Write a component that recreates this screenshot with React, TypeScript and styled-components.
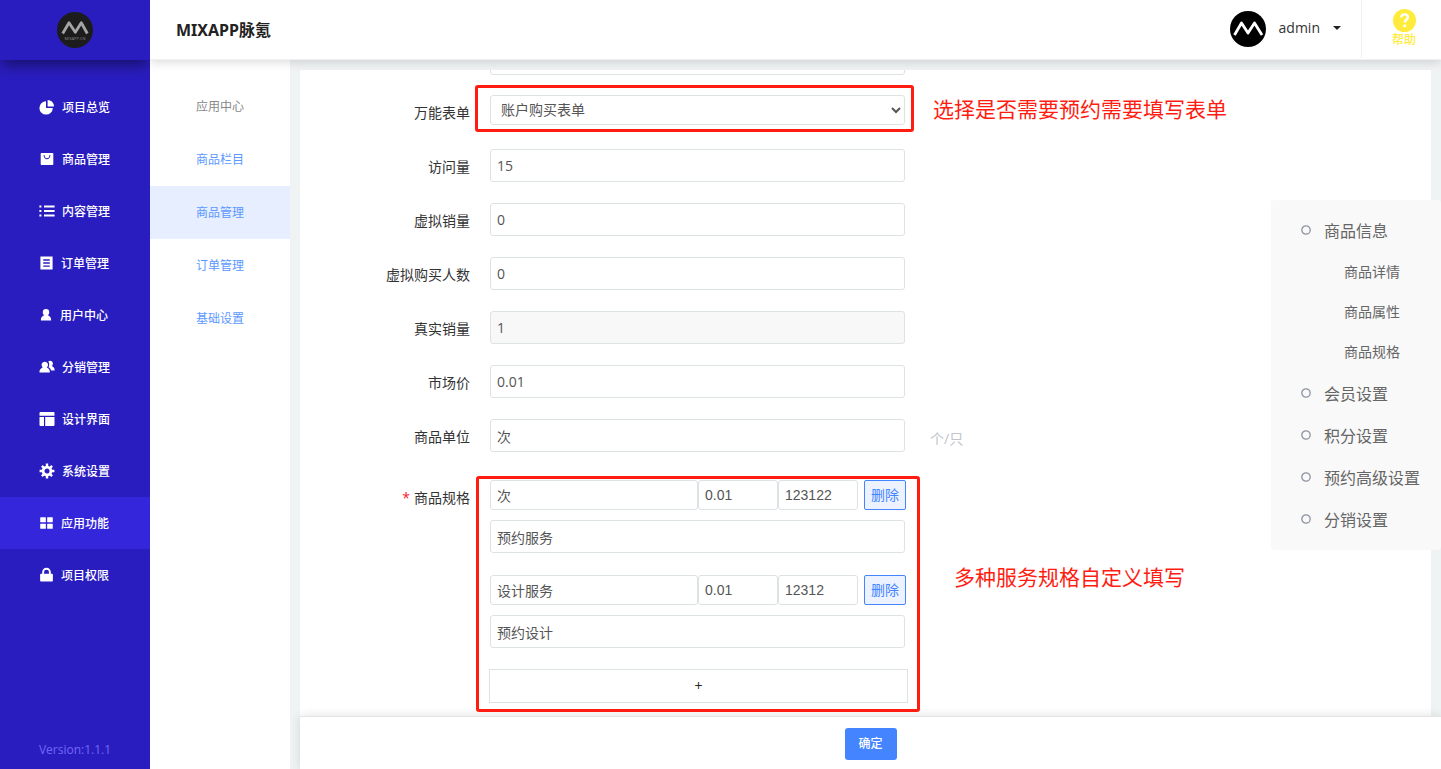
import React from "react";
import styled, { createGlobalStyle, css } from "styled-components";

const GlobalStyle = createGlobalStyle`
  *, *::before, *::after { box-sizing: border-box; }
  body {
    margin: 0;
    background: #eff3f4;
    color: #333;
    font-family: "Open Sans", "Noto Sans CJK SC", sans-serif;
    font-size: 14px;
    line-height: 20px;
  }
  button, input, select { font: inherit; margin: 0; }
  ul { list-style: none; margin: 0; padding: 0; }
  a { color: inherit; text-decoration: none; }
`;

const Shell = styled.div`
  display: flex;
  height: 100vh;
  overflow: hidden;
`;

/* ---------- left navigation ---------- */

const Sidebar = styled.nav`
  display: flex;
  flex-direction: column;
  flex: none;
  width: 150px;
  background: #2a1dbf;
  color: #fff;
  z-index: 3;
`;

const Brand = styled.div`
  display: flex;
  align-items: center;
  justify-content: center;
  height: 60px;
  box-shadow: 0 8px 12px -2px rgba(0, 0, 0, 0.4);
  clip-path: inset(0 0 -20px 0);
`;

const NavList = styled.ul`
  padding-top: 21px;
  flex: 1;
`;

const NavLink = styled.a<{ $active?: boolean }>`
  display: flex;
  align-items: center;
  gap: 7px;
  height: 52px;
  padding-left: 39px;
  font-size: 12px;
  font-weight: 500;
  background: ${(p) => (p.$active ? "#3426db" : "transparent")};
`;

const NavText = styled.span`
  padding-top: 1px;
`;

const IconBox = styled.span<{ $width: number }>`
  display: flex;
  justify-content: center;
  flex: none;
  width: ${(p) => p.$width}px;
  padding-bottom: 1px;
`;

const Version = styled.div`
  padding-bottom: 9px;
  text-align: center;
  font-size: 12px;
  color: #7468f5;
`;

/* ---------- header ---------- */

const Column = styled.div`
  display: flex;
  flex-direction: column;
  flex: 1;
  min-width: 0;
`;

const Header = styled.header`
  display: flex;
  align-items: center;
  flex: none;
  height: 60px;
  padding-left: 26px;
  background: #fff;
  border-bottom: 1px solid #f1f1f1;
  box-shadow: 0 2px 10px rgba(0, 0, 0, 0.15);
  z-index: 2;
`;

const Title = styled.h1`
  flex: 1;
  margin: 0;
  font-family: "Noto Sans", "Noto Sans CJK SC", sans-serif;
  font-size: 16px;
  font-weight: 700;
  color: #222;
`;

const Account = styled.button`
  display: flex;
  align-items: center;
  align-self: flex-start;
  gap: 13px;
  height: 58px;
  padding: 0 20px 0 0;
  border: 0;
  border-right: 1px solid #f0f0f0;
  background: none;
  color: #333;
`;

const UserName = styled.span`
  padding-bottom: 2px;
`;

const Caret = styled.span`
  margin-bottom: 2px;
  border: 4px solid transparent;
  border-top-color: #222;
  border-bottom-width: 0;
`;

const Help = styled.a`
  display: flex;
  flex-direction: column;
  align-items: center;
  width: 79px;
  padding: 0 0 2px 5px;
  font-size: 12px;
  font-weight: 500;
  line-height: 16px;
  color: #ffeb3b;
`;

/* ---------- body ---------- */

const Body = styled.div`
  display: flex;
  flex: 1;
  min-height: 0;
`;

const SubMenu = styled.nav`
  flex: none;
  width: 140px;
  padding-top: 20px;
  background: #fff;
  font-size: 12px;
  text-align: center;
  line-height: 53px;
  color: #5b98ff;
`;

const SubTitle = styled.div`
  color: #888;
`;

const SubLink = styled.a<{ $active?: boolean }>`
  display: block;
  background: ${(p) => (p.$active ? "#e7eeff" : "transparent")};
`;

const Workspace = styled.main`
  position: relative;
  display: flex;
  flex-direction: column;
  flex: 1;
  min-width: 0;
  padding: 10px 0 0 10px;
`;

const Card = styled.section`
  flex: 1;
  min-height: 0;
  margin-right: 10px;
  overflow: hidden;
  background: #fff;
`;

const Form = styled.form`
  margin-top: -29px;
`;

const Row = styled.div<{ $top?: number }>`
  display: grid;
  grid-template-columns: 170px 415px 1fr;
  column-gap: 20px;
  min-height: 54px;
  padding-top: ${(p) => p.$top ?? 0}px;
`;

const Label = styled.label`
  padding-top: 8px;
  text-align: right;
`;

const Required = styled.span`
  color: #f5222d;
  margin-right: 4px;
`;

const Control = styled.div`
  position: relative;
`;

const field = css`
  display: block;
  border: 1px solid #dde2e5;
  border-radius: 3px;
  background: #fff;
  color: #555;
  outline: 0;
`;

const Input = styled.input<{ $tall?: boolean }>`
  ${field}
  width: 100%;
  height: ${(p) => (p.$tall ? 34 : 33)}px;
  padding: 0 6px;
  &:disabled {
    background: #f8f8f8;
  }
`;

const Select = styled.select`
  ${field}
  width: 100%;
  height: 30px;
  padding: 0 6px 1px;
`;

const SmallInput = styled.input<{ $width: number }>`
  ${field}
  width: ${(p) => p.$width}px;
  height: 30px;
  padding: 0 6px;
  font-family: "Liberation Sans", "Noto Sans CJK SC", sans-serif;
`;

const Hint = styled.span`
  padding: 10px 0 0 5px;
  color: #c0c4cc;
`;

const Callout = styled.strong<{ $top: number; $left: number }>`
  padding: ${(p) => p.$top}px 0 0 ${(p) => p.$left}px;
  font-size: 21px;
  line-height: 28px;
  font-weight: 400;
  color: #ff1d12;
`;

const Frame = styled.span<{ $inset: string }>`
  position: absolute;
  inset: ${(p) => p.$inset};
  border: 3px solid #ff1d12;
  border-radius: 3px;
  pointer-events: none;
`;

const Spec = styled.div`
  margin-bottom: 22px;
`;

const SpecLine = styled.div`
  display: flex;
  width: 416px;
  margin-bottom: 10px;
`;

const RemoveButton = styled.button`
  flex: none;
  width: 42px;
  height: 30px;
  margin-left: 6px;
  padding: 0;
  border: 1px solid #4485ff;
  border-radius: 2px;
  background: #ecf2ff;
  color: #4485ff;
`;

const AddButton = styled.button`
  display: block;
  width: 419px;
  height: 34px;
  margin: -1px 0 0 -1px;
  border: 1px solid #dde2e5;
  background: #fff;
  color: #222;
`;

const Footer = styled.footer`
  display: flex;
  align-items: center;
  justify-content: center;
  flex: none;
  height: 53px;
  padding-top: 2px;
  border-top: 1px solid #e5e5e5;
  background: #fff;
  box-shadow: 0 0 10px rgba(0, 0, 0, 0.12);
`;

const Submit = styled.button`
  width: 52px;
  height: 32px;
  padding: 0;
  border: 0;
  border-radius: 3px;
  background: #4485ff;
  color: #fff;
  font-size: 12px;
  font-weight: 500;
`;

const Anchors = styled.ul`
  position: absolute;
  top: 140px;
  right: 0;
  width: 170px;
  padding: 10px 0 9px 30px;
  border-radius: 4px;
  background: #f9f9f9;
  color: #666;
`;

const AnchorLink = styled.a`
  display: flex;
  align-items: center;
  gap: 13px;
  height: 42px;
  font-size: 16px;
`;

const AnchorSub = styled.ul`
  padding: 0 0 1px 43px;
  line-height: 40px;
`;

/* ---------- drawings ---------- */

const Svg = ({ children, size = 16 }: { children: React.ReactNode; size?: number }) => (
  <svg width={size} height={size} viewBox="0 0 16 16" fill="currentColor" aria-hidden="true">
    {children}
  </svg>
);

const Dot = () => (
  <svg width="10" height="12" viewBox="0 0 10 12" aria-hidden="true">
    <circle cx="5" cy="5" r="4.2" fill="none" stroke="#8e93a3" strokeWidth="1.3" />
  </svg>
);

const icons = {
  pie: (
    <>
      <path d="M7 2.2A6.7 6.7 0 1 0 13.8 9H7z" />
      <path d="M8.6 1v6.4H15A6.4 6.4 0 0 0 8.6 1z" />
    </>
  ),
  bag: (
    <path
      fillRule="evenodd"
      d="M2.5 2h11a.8.8 0 0 1 .8.8v10.4a.8.8 0 0 1-.8.8h-11a.8.8 0 0 1-.8-.8V2.8a.8.8 0 0 1 .8-.8zM4.6 4c0 2.6 1.5 4.2 3.4 4.2S11.400 6.600 11.400 4h-.9c0 2-1 3.300-2.500 3.300S5.500 6 5.500 4z"
    />
  ),
  list: <path d="M.4 2.500h2v2h-2zM5 2.500h10.600v2H5zM.4 7h2v2h-2zM5 7h10.600v2H5zM.4 11.500h2v2h-2zM5 11.500h10.600v2H5z" />,
  doc: <path fillRule="evenodd" d="M1.500 1h13v14h-13zM4.500 4v1.500h7V4zM4.500 7.300v1.500h7V7.300zM4.500 10.600v1.500h7v-1.500z" />,
  user: (
    <path d="M8 1.200a3.700 3.700 0 0 1 3.700 3.700c0 1.500-.7 2.700-1.600 3.500 2.300.9 3.700 2.500 3.700 4.800v1.100H2.200v-1.100c0-2.300 1.400-3.900 3.700-4.800C5 7.600 4.300 6.400 4.300 4.900A3.700 3.700 0 0 1 8 1.200z" />
  ),
  users: (
    <>
      <path d="M5.800 2.700c1.900 0 3.200 1.300 3.200 3.100 0 1.200-.5 2.100-1.200 2.800 1.900.8 3 2.200 3 4.200v.7H.5v-.7c0-2 1.200-3.400 3.200-4.200-.7-.7-1.100-1.600-1.100-2.800 0-1.800 1.300-3.100 3.200-3.100z" />
      <path d="M9.300 2.300c.4-.4 1-.6 1.700-.6 1.700 0 2.900 1.200 2.900 2.900 0 1.100-.4 1.900-1.100 2.500 1.700.8 2.800 2 2.800 3.900v.6h-3.500c-.4-1.500-1.300-2.600-2.600-3.300.5-.7.700-1.500.7-2.500 0-1.400-.3-2.600-.9-3.500z" />
    </>
  ),
  layout: <path d="M1.500 1h13a1 1 0 0 1 1 1v2.700H.5V2a1 1 0 0 1 1-1zM.5 6H5v9H1.500a1 1 0 0 1-1-1zM6.200 6h9.300v8a1 1 0 0 1-1 1H6.200z" />,
  gear: (
    <>
      <circle cx="8" cy="8" r="3.900" fill="none" stroke="currentColor" strokeWidth="2.800" />
      <path
        d="M8 .6v3M8 12.400v3M.6 8h3M12.400 8h3M2.900 2.900 5 5M11 11l2.100 2.100M2.900 13.100 5 11M11 5l2.100-2.100"
        stroke="currentColor"
        strokeWidth="2.400"
      />
    </>
  ),
  grid: (
    <>
      <rect x="1.300" y="1.800" width="6" height="5.400" rx=".6" />
      <rect x="8.700" y="1.800" width="6" height="5.400" rx=".6" />
      <rect x="1.300" y="8.800" width="6" height="5.400" rx=".6" />
      <rect x="8.700" y="8.800" width="6" height="5.400" rx=".6" />
    </>
  ),
  lock: (
    <>
      <path d="M4.400 7V4.900a3.600 3.600 0 0 1 7.200 0V7" fill="none" stroke="currentColor" strokeWidth="2" />
      <rect x="1.200" y="6.600" width="13.600" height="8.200" rx="1" />
    </>
  ),
};

const nav: { icon: keyof typeof icons; text: string; width: number; active?: boolean }[] = [
  { icon: "pie", text: "项目总览", width: 16 },
  { icon: "bag", text: "商品管理", width: 16 },
  { icon: "list", text: "内容管理", width: 16 },
  { icon: "doc", text: "订单管理", width: 15 },
  { icon: "user", text: "用户中心", width: 14 },
  { icon: "users", text: "分销管理", width: 16 },
  { icon: "layout", text: "设计界面", width: 16 },
  { icon: "gear", text: "系统设置", width: 16 },
  { icon: "grid", text: "应用功能", width: 15, active: true },
  { icon: "lock", text: "项目权限", width: 15 },
];

const subMenu = ["商品栏目", "商品管理", "订单管理", "基础设置"];

const fields = [
  { id: "visits", label: "访问量", value: "15" },
  { id: "virtual-sales", label: "虚拟销量", value: "0" },
  { id: "virtual-buyers", label: "虚拟购买人数", value: "0" },
  { id: "real-sales", label: "真实销量", value: "1", disabled: true },
  { id: "market-price", label: "市场价", value: "0.01" },
  { id: "unit", label: "商品单位", value: "次", hint: "个/只" },
];

const specs = [
  { name: "次", price: "0.01", stock: "123122", note: "预约服务" },
  { name: "设计服务", price: "0.01", stock: "12312", note: "预约设计" },
];

export default function App() {
  return (
    <Shell>
      <GlobalStyle />
      <Sidebar>
        <Brand>
          <svg width="36" height="36" viewBox="0 0 36 36" aria-hidden="true">
            <circle cx="18" cy="18" r="18" fill="#1c1c1c" />
            <path
              d="M5.700 21.500 12 10.700l6.300 9.600 6-9.600 6 10.800"
              fill="none"
              stroke="#a5a5a5"
              strokeWidth="2.800"
              strokeLinejoin="round"
            />
            <text x="18" y="27.500" textAnchor="middle" fontSize="4" fill="#8a8a8a">
              MIXAPP.CN
            </text>
          </svg>
        </Brand>
        <NavList>
          {nav.map((n) => (
            <li key={n.text}>
              <NavLink href="#" $active={n.active}>
                <IconBox $width={n.width}>
                  <Svg>{icons[n.icon]}</Svg>
                </IconBox>
                <NavText>{n.text}</NavText>
              </NavLink>
            </li>
          ))}
        </NavList>
        <Version>Version:1.1.1</Version>
      </Sidebar>

      <Column>
        <Header>
          <Title>MIXAPP脉氪</Title>
          <Account type="button">
            <svg width="36" height="36" viewBox="0 0 36 36" aria-hidden="true">
              <circle cx="18" cy="18" r="18" fill="#000" />
              <path
                d="M4.500 24 11.500 12 18 22l6.500-10L32 24"
                fill="none"
                stroke="#fff"
                strokeWidth="2.800"
                strokeLinejoin="round"
              />
            </svg>
            <UserName>admin</UserName>
            <Caret />
          </Account>
          <Help href="#">
            <svg width="23" height="23" viewBox="0 0 23 23" aria-hidden="true">
              <circle cx="11.500" cy="11.500" r="11.500" fill="#ffeb3b" />
              <path
                d="M8.300 8.600c0-2 1.400-3.200 3.300-3.200s3.300 1.200 3.300 2.900c0 2.400-3.200 2.600-3.200 5.100"
                fill="none"
                stroke="#fff"
                strokeWidth="2.400"
              />
              <circle cx="11.700" cy="16.700" r="1.500" fill="#fff" />
            </svg>
            帮助
          </Help>
        </Header>

        <Body>
          <SubMenu>
            <SubTitle>应用中心</SubTitle>
            {subMenu.map((text) => (
              <SubLink key={text} href="#" $active={text === "商品管理"}>
                {text}
              </SubLink>
            ))}
          </SubMenu>

          <Workspace>
            <Card>
              <Form>
                <Row>
                  <span />
                  <Input $tall aria-label="商品" />
                </Row>
                <Row>
                  <Label htmlFor="form">万能表单</Label>
                  <Control>
                    <Select id="form">
                      <option>账户购买表单</option>
                    </Select>
                    <Frame $inset="-10px -9px 17px -15px" />
                  </Control>
                  <Callout $top={0} $left={8}>
                    选择是否需要预约需要填写表单
                  </Callout>
                </Row>
                {fields.map((f) => (
                  <Row key={f.id}>
                    <Label htmlFor={f.id}>{f.label}</Label>
                    <Input id={f.id} defaultValue={f.value} disabled={f.disabled} />
                    {f.hint && <Hint>{f.hint}</Hint>}
                  </Row>
                ))}
                <Row $top={7}>
                  <Label htmlFor="spec-0">
                    <Required>*</Required>
                    商品规格
                  </Label>
                  <Control>
                    {specs.map((s, i) => (
                      <Spec key={s.note}>
                        <SpecLine>
                          <SmallInput $width={208} id={`spec-${i}`} defaultValue={s.name} />
                          <SmallInput $width={80} aria-label="价格" defaultValue={s.price} />
                          <SmallInput $width={80} aria-label="库存" defaultValue={s.stock} />
                          <RemoveButton type="button">删除</RemoveButton>
                        </SpecLine>
                        <Input aria-label="说明" defaultValue={s.note} />
                      </Spec>
                    ))}
                    <AddButton type="button">+</AddButton>
                    <Frame $inset="-4px -15px -9px -14px" />
                  </Control>
                  <Callout $top={83} $left={29}>
                    多种服务规格自定义填写
                  </Callout>
                </Row>
              </Form>
            </Card>
            <Footer>
              <Submit type="button">确定</Submit>
            </Footer>
            <Anchors>
              <li>
                <AnchorLink href="#">
                  <Dot />
                  商品信息
                </AnchorLink>
                <AnchorSub>
                  <li><a href="#">商品详情</a></li>
                  <li><a href="#">商品属性</a></li>
                  <li><a href="#">商品规格</a></li>
                </AnchorSub>
              </li>
              {["会员设置", "积分设置", "预约高级设置", "分销设置"].map((text) => (
                <li key={text}>
                  <AnchorLink href="#">
                    <Dot />
                    {text}
                  </AnchorLink>
                </li>
              ))}
            </Anchors>
          </Workspace>
        </Body>
      </Column>
    </Shell>
  );
}
